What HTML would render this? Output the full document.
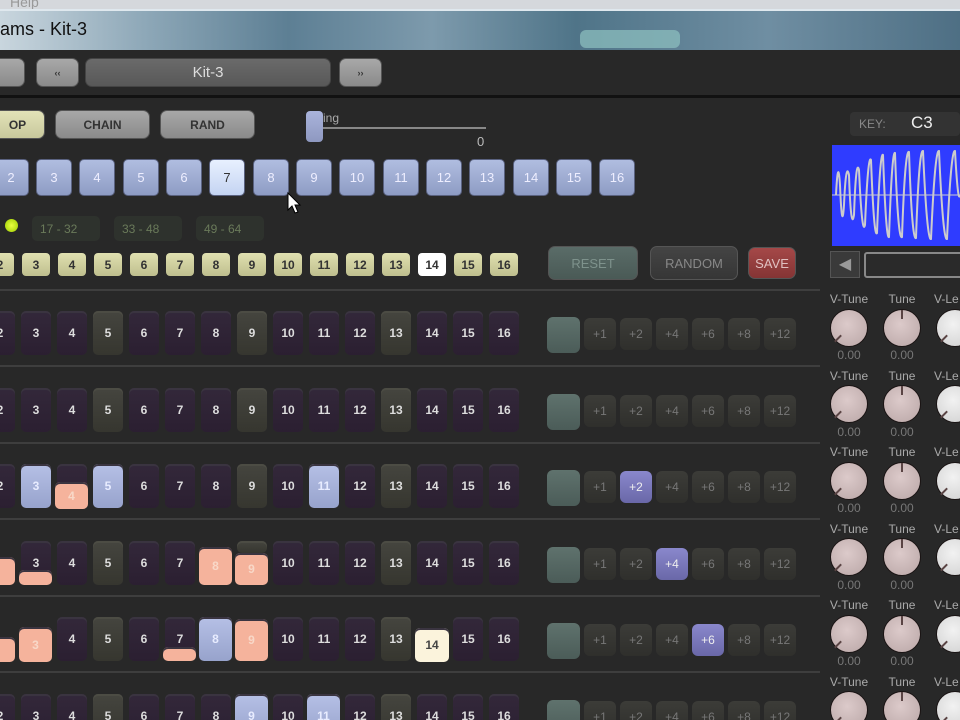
<!DOCTYPE html>
<html><head><meta charset="utf-8"><style>
*{margin:0;padding:0;box-sizing:border-box}
html,body{width:960px;height:720px;overflow:hidden}
body{background:#282828;position:relative;font-family:"Liberation Sans",sans-serif}
.a{position:absolute}
.gb{position:absolute;border-radius:7px;background:linear-gradient(#a8a8a8,#8a8a8a);border:1px solid #555;color:#333;font-weight:bold;font-size:12px;display:flex;align-items:center;justify-content:center}
.bp{position:absolute;top:159px;width:36px;height:37px;border-radius:5px;background:linear-gradient(#b0bde0,#8e9cc4);color:#eef;font-size:13px;display:flex;align-items:center;justify-content:center;border:1px solid #5a6280}
.yp{position:absolute;top:253px;width:28px;height:23px;border-radius:4px;background:linear-gradient(#e0e0b0,#bfbf8e);color:#333;font-size:12px;display:flex;align-items:center;justify-content:center;font-weight:bold}
.p{position:absolute;width:30px;height:44px;border-radius:5px;background:linear-gradient(#33283a,#2b1f31);color:#ddd;font-size:12px;font-weight:bold;display:flex;align-items:center;justify-content:center;box-shadow:inset 0 2px 0 #3a3440}
.p.g{background:linear-gradient(#45453f,#36362f);box-shadow:inset 0 2px 0 #4c4c44}
.p.b{background:linear-gradient(#b6c0e6,#97a3cc);color:#e8ecff}
.p.s{background:#f5b39c;color:#f8d8c8}
.p.c{background:#fbf3dc;color:#444}
.sep{position:absolute;left:0;width:820px;height:2px;background:#3e3e3e}
.t{position:absolute;width:33px;height:36px;border-radius:6px;background:linear-gradient(#5f726d,#4b5c58)}
.pl{position:absolute;width:32px;height:32px;border-radius:6px;background:linear-gradient(#3c3c38,#2f2f2c);color:#777;font-size:12px;display:flex;align-items:center;justify-content:center}
.pl.on{background:linear-gradient(#8a88cc,#6a68a8);color:#eee}
.lb{position:absolute;width:50px;text-align:center;color:#aaa;font-size:12px}
.k{position:absolute;width:38px;height:38px;border-radius:50%;background:radial-gradient(circle at 45% 40%,#dccaca,#b9a6a6);border:1px solid #1a1414}
.k::after{content:"";position:absolute;width:2px;height:9px;background:#5a4444;left:6px;top:24px;transform:rotate(45deg)}
.k.u::after{left:17px;top:0;transform:none}
.k.w{background:radial-gradient(circle at 45% 40%,#f2f2f2,#cfcfcf)}
</style></head><body>
<div class="a" style="left:0;top:0;width:960px;height:9px;background:#d5d8dc"></div>
<div class="a" style="left:10px;top:-6px;color:#999;font-size:14px">Help</div>
<div class="a" style="left:0;top:9px;width:960px;height:41px;background:linear-gradient(90deg,#c9d6de 0%,#8ea8b8 15%,#5d7f94 30%,#7d9aac 45%,#4f7488 60%,#6f8ea2 80%,#4e6f84 100%);border-top:2px solid #dfe8ee"></div>
<div class="a" style="left:580px;top:30px;width:100px;height:18px;background:#8fc2c0;opacity:.7;border-radius:6px"></div>
<div class="a" style="left:0;top:19px;color:#111;font-size:18px">ams - Kit-3</div>
<div class="a" style="left:0;top:50px;width:960px;height:46px;background:#282828"></div>
<div class="a" style="left:0;top:95px;width:960px;height:3px;background:#111"></div>
<div class="gb" style="left:-10px;top:58px;width:35px;height:29px"></div>
<div class="gb" style="left:36px;top:58px;width:43px;height:29px;font-size:9px">‹‹</div>
<div class="gb" style="left:85px;top:58px;width:246px;height:29px;color:#ddd;font-weight:normal;font-size:15px;background:linear-gradient(#6a6a6a,#585858);border-color:#444">Kit-3</div>
<div class="gb" style="left:339px;top:58px;width:43px;height:29px;font-size:9px">››</div>
<div class="gb" style="left:-10px;top:110px;width:55px;height:29px;background:linear-gradient(#e2e2b8,#c8c89c)">OP</div>
<div class="gb" style="left:55px;top:110px;width:95px;height:29px">CHAIN</div>
<div class="gb" style="left:160px;top:110px;width:95px;height:29px">RAND</div>
<div class="a" style="left:322px;top:127px;width:164px;height:2px;background:#888"></div>
<div class="a" style="left:306px;top:111px;width:17px;height:31px;border-radius:4px;background:linear-gradient(#aab4dc,#8e98c0)"></div>
<div class="a" style="left:323px;top:111px;color:#aaa;font-size:12px">ing</div>
<div class="a" style="left:477px;top:134px;color:#bbb;font-size:13px">0</div>
<div class="bp" style="left:-7px">2</div><div class="bp" style="left:36px">3</div><div class="bp" style="left:79px">4</div><div class="bp" style="left:123px">5</div><div class="bp" style="left:166px">6</div><div class="bp" style="left:209px;background:linear-gradient(#e8f0ff,#c4d4f2);color:#333">7</div><div class="bp" style="left:253px">8</div><div class="bp" style="left:296px">9</div><div class="bp" style="left:339px">10</div><div class="bp" style="left:383px">11</div><div class="bp" style="left:426px">12</div><div class="bp" style="left:469px">13</div><div class="bp" style="left:513px">14</div><div class="bp" style="left:556px">15</div><div class="bp" style="left:599px">16</div>
<svg class="a" style="left:287px;top:192px" width="16" height="24" viewBox="0 0 16 24"><path d="M1 1 L1 18 L5 14 L8 21 L11 20 L8 13 L13 13 Z" fill="#fff" stroke="#000"/></svg>
<div class="a" style="left:5px;top:219px;width:13px;height:13px;border-radius:50%;background:radial-gradient(#e8ff40,#9ccc00)"></div>
<div class="a" style="left:32px;top:216px;width:68px;height:25px;border-radius:5px;background:#2e322d;color:#6a7a5a;font-size:12px;padding:6px 8px">17 - 32</div>
<div class="a" style="left:114px;top:216px;width:68px;height:25px;border-radius:5px;background:#2e322d;color:#6a7a5a;font-size:12px;padding:6px 8px">33 - 48</div>
<div class="a" style="left:196px;top:216px;width:68px;height:25px;border-radius:5px;background:#2e322d;color:#6a7a5a;font-size:12px;padding:6px 8px">49 - 64</div>
<div class="yp" style="left:-14px">2</div><div class="yp" style="left:22px">3</div><div class="yp" style="left:58px">4</div><div class="yp" style="left:94px">5</div><div class="yp" style="left:130px">6</div><div class="yp" style="left:166px">7</div><div class="yp" style="left:202px">8</div><div class="yp" style="left:238px">9</div><div class="yp" style="left:274px">10</div><div class="yp" style="left:310px">11</div><div class="yp" style="left:346px">12</div><div class="yp" style="left:382px">13</div><div class="yp" style="left:418px;background:#fff">14</div><div class="yp" style="left:454px">15</div><div class="yp" style="left:490px">16</div>
<div class="gb" style="left:548px;top:246px;width:90px;height:34px;background:linear-gradient(#5a6c68,#4a5a56);color:#7e928c;font-weight:normal;font-size:13px">RESET</div>
<div class="gb" style="left:650px;top:246px;width:88px;height:34px;background:linear-gradient(#444,#363636);color:#888;font-weight:normal;font-size:13px">RANDOM</div>
<div class="gb" style="left:748px;top:247px;width:48px;height:32px;background:linear-gradient(#a54848,#843434);color:#e0c0c0;font-weight:normal;font-size:13px">SAVE</div>
<div class="a" style="left:850px;top:112px;width:110px;height:24px;background:#333;border-radius:4px"></div>
<div class="a" style="left:859px;top:117px;color:#888;font-size:12px">KEY:</div>
<div class="a" style="left:911px;top:113px;color:#eee;font-size:17px">C3</div>
<svg class="a" style="left:832px;top:145px" width="128" height="101" viewBox="0 0 128 101"><rect width="128" height="101" fill="#2f3cff"/><line x1="0" y1="50" x2="128" y2="50" stroke="#ccc"/><path d="M4 50 Q6 10 8 40 Q10 90 12 60 Q14 15 17 30 Q19 88 22 70 Q24 12 27 25 Q30 92 33 80 Q36 8 39 15 Q42 94 45 88 Q48 6 51 10 Q54 95 57 92 Q60 5 63 8 Q66 96 70 92 Q73 4 77 7 Q80 96 84 93 Q87 4 91 6 Q95 96 99 94 Q103 4 107 6 Q111 96 115 94 Q119 4 123 6 Q126 60 128 50" fill="none" stroke="#ccc" stroke-width="2"/></svg>
<div class="a" style="left:830px;top:251px;width:30px;height:27px;background:#3a3a3a;border:1px solid #555;color:#999;font-size:16px;text-align:center;line-height:25px">◀</div>
<div class="a" style="left:864px;top:252px;width:100px;height:26px;background:#2a2a2a;border:2px solid #888;border-radius:3px"></div>

<div class="sep" style="top:289px"></div><div class="sep" style="top:365px"></div><div class="sep" style="top:442px"></div><div class="sep" style="top:518px"></div><div class="sep" style="top:595px"></div><div class="sep" style="top:671px"></div>

<div class="p" style="left:-15px;top:311px">2</div><div class="p" style="left:21px;top:311px">3</div><div class="p" style="left:57px;top:311px">4</div><div class="p g" style="left:93px;top:311px">5</div><div class="p" style="left:129px;top:311px">6</div><div class="p" style="left:165px;top:311px">7</div><div class="p" style="left:201px;top:311px">8</div><div class="p g" style="left:237px;top:311px">9</div><div class="p" style="left:273px;top:311px">10</div><div class="p" style="left:309px;top:311px">11</div><div class="p" style="left:345px;top:311px">12</div><div class="p g" style="left:381px;top:311px">13</div><div class="p" style="left:417px;top:311px">14</div><div class="p" style="left:453px;top:311px">15</div><div class="p" style="left:489px;top:311px">16</div>
<div class="p" style="left:-15px;top:388px">2</div><div class="p" style="left:21px;top:388px">3</div><div class="p" style="left:57px;top:388px">4</div><div class="p g" style="left:93px;top:388px">5</div><div class="p" style="left:129px;top:388px">6</div><div class="p" style="left:165px;top:388px">7</div><div class="p" style="left:201px;top:388px">8</div><div class="p g" style="left:237px;top:388px">9</div><div class="p" style="left:273px;top:388px">10</div><div class="p" style="left:309px;top:388px">11</div><div class="p" style="left:345px;top:388px">12</div><div class="p g" style="left:381px;top:388px">13</div><div class="p" style="left:417px;top:388px">14</div><div class="p" style="left:453px;top:388px">15</div><div class="p" style="left:489px;top:388px">16</div>
<div class="p" style="left:-15px;top:464px">2</div><div class="p b" style="left:21px;top:464px">3</div><div class="p" style="left:57px;top:464px"></div><div class="p s" style="left:55px;top:482px;width:33px;height:27px">4</div><div class="p b" style="left:93px;top:464px">5</div><div class="p" style="left:129px;top:464px">6</div><div class="p" style="left:165px;top:464px">7</div><div class="p" style="left:201px;top:464px">8</div><div class="p g" style="left:237px;top:464px">9</div><div class="p" style="left:273px;top:464px">10</div><div class="p b" style="left:309px;top:464px">11</div><div class="p" style="left:345px;top:464px">12</div><div class="p g" style="left:381px;top:464px">13</div><div class="p" style="left:417px;top:464px">14</div><div class="p" style="left:453px;top:464px">15</div><div class="p" style="left:489px;top:464px">16</div>
<div class="p s" style="left:-15px;top:557px;height:28px"></div><div class="p" style="left:21px;top:541px">3</div><div class="p s" style="left:19px;top:570px;width:33px;height:15px"></div><div class="p" style="left:57px;top:541px">4</div><div class="p g" style="left:93px;top:541px">5</div><div class="p" style="left:129px;top:541px">6</div><div class="p" style="left:165px;top:541px">7</div><div class="p s" style="left:199px;top:547px;width:33px;height:38px">8</div><div class="p g" style="left:237px;top:541px;height:12px"></div><div class="p s" style="left:235px;top:553px;width:33px;height:32px">9</div><div class="p" style="left:273px;top:541px">10</div><div class="p" style="left:309px;top:541px">11</div><div class="p" style="left:345px;top:541px">12</div><div class="p g" style="left:381px;top:541px">13</div><div class="p" style="left:417px;top:541px">14</div><div class="p" style="left:453px;top:541px">15</div><div class="p" style="left:489px;top:541px">16</div>
<div class="p s" style="left:-15px;top:637px;height:25px"></div><div class="p s" style="left:19px;top:627px;width:33px;height:35px">3</div><div class="p" style="left:57px;top:617px">4</div><div class="p g" style="left:93px;top:617px">5</div><div class="p" style="left:129px;top:617px">6</div><div class="p" style="left:165px;top:617px">7</div><div class="p s" style="left:163px;top:647px;width:33px;height:14px"></div><div class="p b" style="left:199px;top:617px;width:33px">8</div><div class="p s" style="left:235px;top:619px;width:33px;height:42px">9</div><div class="p" style="left:273px;top:617px">10</div><div class="p" style="left:309px;top:617px">11</div><div class="p" style="left:345px;top:617px">12</div><div class="p g" style="left:381px;top:617px">13</div><div class="p c" style="left:415px;top:628px;width:34px;height:34px">14</div><div class="p" style="left:453px;top:617px">15</div><div class="p" style="left:489px;top:617px">16</div>
<div class="p" style="left:-15px;top:694px">2</div><div class="p" style="left:21px;top:694px">3</div><div class="p" style="left:57px;top:694px">4</div><div class="p g" style="left:93px;top:694px">5</div><div class="p" style="left:129px;top:694px">6</div><div class="p" style="left:165px;top:694px">7</div><div class="p" style="left:201px;top:694px">8</div><div class="p b" style="left:235px;top:694px;width:33px">9</div><div class="p" style="left:273px;top:694px">10</div><div class="p b" style="left:307px;top:694px;width:33px">11</div><div class="p" style="left:345px;top:694px">12</div><div class="p g" style="left:381px;top:694px">13</div><div class="p" style="left:417px;top:694px">14</div><div class="p" style="left:453px;top:694px">15</div><div class="p" style="left:489px;top:694px">16</div>

<div class="t" style="left:547px;top:317px"></div><div class="pl" style="left:584px;top:318px">+1</div><div class="pl" style="left:620px;top:318px">+2</div><div class="pl" style="left:656px;top:318px">+4</div><div class="pl" style="left:692px;top:318px">+6</div><div class="pl" style="left:728px;top:318px">+8</div><div class="pl" style="left:764px;top:318px">+12</div>
<div class="t" style="left:547px;top:394px"></div><div class="pl" style="left:584px;top:395px">+1</div><div class="pl" style="left:620px;top:395px">+2</div><div class="pl" style="left:656px;top:395px">+4</div><div class="pl" style="left:692px;top:395px">+6</div><div class="pl" style="left:728px;top:395px">+8</div><div class="pl" style="left:764px;top:395px">+12</div>
<div class="t" style="left:547px;top:470px"></div><div class="pl" style="left:584px;top:471px">+1</div><div class="pl on" style="left:620px;top:471px">+2</div><div class="pl" style="left:656px;top:471px">+4</div><div class="pl" style="left:692px;top:471px">+6</div><div class="pl" style="left:728px;top:471px">+8</div><div class="pl" style="left:764px;top:471px">+12</div>
<div class="t" style="left:547px;top:547px"></div><div class="pl" style="left:584px;top:548px">+1</div><div class="pl" style="left:620px;top:548px">+2</div><div class="pl on" style="left:656px;top:548px">+4</div><div class="pl" style="left:692px;top:548px">+6</div><div class="pl" style="left:728px;top:548px">+8</div><div class="pl" style="left:764px;top:548px">+12</div>
<div class="t" style="left:547px;top:623px"></div><div class="pl" style="left:584px;top:624px">+1</div><div class="pl" style="left:620px;top:624px">+2</div><div class="pl" style="left:656px;top:624px">+4</div><div class="pl on" style="left:692px;top:624px">+6</div><div class="pl" style="left:728px;top:624px">+8</div><div class="pl" style="left:764px;top:624px">+12</div>
<div class="t" style="left:547px;top:700px"></div><div class="pl" style="left:584px;top:701px">+1</div><div class="pl" style="left:620px;top:701px">+2</div><div class="pl" style="left:656px;top:701px">+4</div><div class="pl" style="left:692px;top:701px">+6</div><div class="pl" style="left:728px;top:701px">+8</div><div class="pl" style="left:764px;top:701px">+12</div>

<div class="lb" style="left:824px;top:292px">V-Tune</div><div class="lb" style="left:877px;top:292px">Tune</div><div class="lb" style="left:934px;top:292px;text-align:left">V-Le</div>
<div class="k" style="left:830px;top:309px"></div><div class="k u" style="left:883px;top:309px"></div><div class="k w" style="left:936px;top:309px"></div>
<div class="lb" style="left:824px;top:348px;color:#777">0.00</div><div class="lb" style="left:877px;top:348px;color:#777">0.00</div>

<div class="lb" style="left:824px;top:369px">V-Tune</div><div class="lb" style="left:877px;top:369px">Tune</div><div class="lb" style="left:934px;top:369px;text-align:left">V-Le</div>
<div class="k" style="left:830px;top:385px"></div><div class="k u" style="left:883px;top:385px"></div><div class="k w" style="left:936px;top:385px"></div>
<div class="lb" style="left:824px;top:425px;color:#777">0.00</div><div class="lb" style="left:877px;top:425px;color:#777">0.00</div>

<div class="lb" style="left:824px;top:445px">V-Tune</div><div class="lb" style="left:877px;top:445px">Tune</div><div class="lb" style="left:934px;top:445px;text-align:left">V-Le</div>
<div class="k" style="left:830px;top:462px"></div><div class="k u" style="left:883px;top:462px"></div><div class="k w" style="left:936px;top:462px"></div>
<div class="lb" style="left:824px;top:501px;color:#777">0.00</div><div class="lb" style="left:877px;top:501px;color:#777">0.00</div>

<div class="lb" style="left:824px;top:522px">V-Tune</div><div class="lb" style="left:877px;top:522px">Tune</div><div class="lb" style="left:934px;top:522px;text-align:left">V-Le</div>
<div class="k" style="left:830px;top:538px"></div><div class="k u" style="left:883px;top:538px"></div><div class="k w" style="left:936px;top:538px"></div>
<div class="lb" style="left:824px;top:578px;color:#777">0.00</div><div class="lb" style="left:877px;top:578px;color:#777">0.00</div>

<div class="lb" style="left:824px;top:598px">V-Tune</div><div class="lb" style="left:877px;top:598px">Tune</div><div class="lb" style="left:934px;top:598px;text-align:left">V-Le</div>
<div class="k" style="left:830px;top:615px"></div><div class="k u" style="left:883px;top:615px"></div><div class="k w" style="left:936px;top:615px"></div>
<div class="lb" style="left:824px;top:654px;color:#777">0.00</div><div class="lb" style="left:877px;top:654px;color:#777">0.00</div>

<div class="lb" style="left:824px;top:675px">V-Tune</div><div class="lb" style="left:877px;top:675px">Tune</div><div class="lb" style="left:934px;top:675px;text-align:left">V-Le</div>
<div class="k" style="left:830px;top:691px"></div><div class="k u" style="left:883px;top:691px"></div><div class="k w" style="left:936px;top:691px"></div>
</body></html>
